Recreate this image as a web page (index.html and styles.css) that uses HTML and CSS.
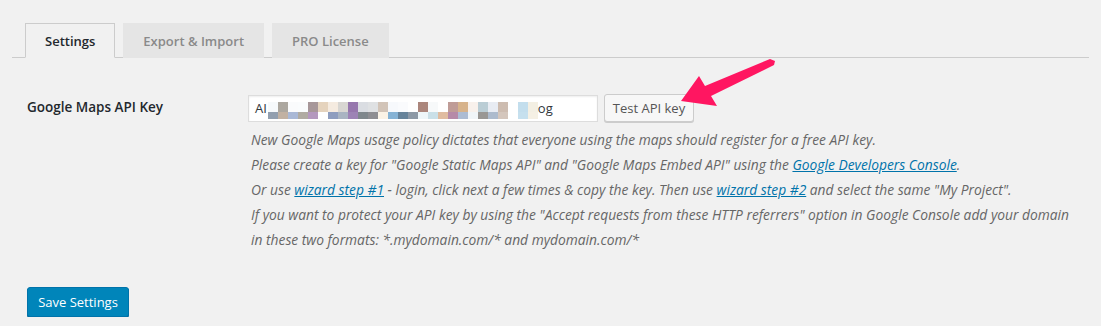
FILE: index.html
```html
<!DOCTYPE html>
<html>
<head>
<meta charset="utf-8">
<link rel="stylesheet" href="styles.css">
</head>
<body>
<div class="wrap">
  <nav class="tabs">
    <a class="tab active">Settings</a>
    <a class="tab">Export &amp; Import</a>
    <a class="tab">PRO License</a>
  </nav>
  <div class="form">
    <div class="row">
      <div class="label">Google Maps API Key</div>
      <div class="field">
        <div class="controls">
          <div class="input">
            <span class="txt">AI</span>
            <span class="mosaic">
              <i style="background:#f6f9fb"></i><i style="background:#aca79f"></i><i style="background:#fafbfc"></i><i style="background:#fafcfd"></i><i style="background:#a79799"></i><i style="background:#e5d3bd"></i><i style="background:#f5ebe0"></i><i style="background:#d8d6d2"></i><i style="background:#9677ad"></i><i style="background:#dadde2"></i><i style="background:#dfe1e3"></i><i style="background:#d2c4b8"></i><i style="background:#f7f9fc"></i><i style="background:#fafbfd"></i><i style="background:#ffffff"></i><i style="background:#ab867c"></i><i style="background:#f7f9fa"></i><i style="background:#ffffff"></i><i style="background:#bf9c97"></i><i style="background:#d7b38b"></i><i style="background:#f8f1ec"></i><i style="background:#bacdd5"></i><i style="background:#e8ecf3"></i><i style="background:#cdbcb0"></i><i style="background:#ffffff"></i><i style="background:#c3deed"></i><i style="background:#f3efe3"></i>
              <i style="background:#929faf"></i><i style="background:#c1b1a2"></i><i style="background:#a9b8d6"></i><i style="background:#b0aba2"></i><i style="background:#b498be"></i><i style="background:#ffffff"></i><i style="background:#8e9dbf"></i><i style="background:#a9b4c2"></i><i style="background:#9d83b5"></i><i style="background:#7f878c"></i><i style="background:#8e8e92"></i><i style="background:#fbf3e6"></i><i style="background:#86b3d5"></i><i style="background:#66839a"></i><i style="background:#8d99a6"></i><i style="background:#eef6f9"></i><i style="background:#cae0e8"></i><i style="background:#e0bca0"></i><i style="background:#b68aa8"></i><i style="background:#acbcd3"></i><i style="background:#f0f5f8"></i><i style="background:#999794"></i><i style="background:#adbbcd"></i><i style="background:#d4c6bc"></i><i style="background:#ffffff"></i><i style="background:#c6e0ee"></i><i style="background:#f5f0e4"></i>
            </span>
            <span class="txt">og</span>
          </div>
          <button class="btn">Test API key</button>
        </div>
        <p class="description">New Google Maps usage policy dictates that everyone using the maps should register for a free API key.<br>
        Please create a key for "Google Static Maps API" and "Google Maps Embed API" using the <a href="#">Google Developers Console</a>.<br>
        Or use <a href="#">wizard step #1</a> - login, click next a few times &amp; copy the key. Then use <a href="#">wizard step #2</a> and select the same "My Project".<br>
        If you want to protect your API key by using the "Accept requests from these HTTP referrers" option in Google Console add your domain<br>in these two formats: *.mydomain.com/* and mydomain.com/*</p>
      </div>
    </div>
    <div class="submit">
      <button class="primary">Save Settings</button>
    </div>
  </div>
</div>
<svg class="arrow" width="110" height="60" viewBox="670 55 110 60">
  <polygon points="681,101 699,76 705,86 770,59 775,61 774,65 711,96 717,106" fill="#ff1661"/>
</svg>
</body>
</html>
```
FILE: styles.css
```css
html, body {
  margin: 0;
  padding: 0;
  background: #f1f1f1;
  font-family: "Open Sans", "Noto Sans", sans-serif;
  color: #444;
}
.wrap {
  padding: 23px 12px 0 12px;
}
.tabs {
  display: flex;
  gap: 8px;
  padding-left: 13px;
  border-bottom: 1px solid #ccc;
  height: 34px;
}
.tab {
  display: flex;
  align-items: center;
  box-sizing: border-box;
  height: 35px;
  padding: 0 19px;
  background: #e5e5e5;
  border: 1px solid #e5e5e5;
  border-bottom: none;
  font-size: 13px;
  font-weight: 600;
  color: #8a8a8a;
  white-space: nowrap;
}
.tab.active {
  background: #f1f1f1;
  border-color: #ccc;
  color: #23282d;
  border-bottom: 1px solid #f1f1f1;
}
.form {
  padding-left: 15px;
}
.row {
  display: flex;
  padding-top: 36px;
}
.label {
  width: 221px;
  font-size: 13.5px;
  font-weight: 600;
  color: #23282d;
  padding-top: 4px;
}
.controls {
  display: flex;
  align-items: center;
  gap: 6px;
}
.input {
  box-sizing: border-box;
  width: 350px;
  height: 27px;
  background: #fff;
  border: 1px solid #ddd;
  box-shadow: inset 0 1px 2px rgba(0,0,0,.07);
  display: flex;
  align-items: center;
  padding-left: 6px;
  font-size: 13px;
  color: #32373c;
}
.mosaic {
  display: grid;
  grid-template-columns: repeat(27, 10px);
  grid-template-rows: 10px 7px;
  margin: 6px 0 0 1px;
  align-self: flex-start;
}
.mosaic i {
  display: block;
}
.btn {
  box-sizing: border-box;
  height: 28px;
  width: 90px;
  padding: 0;
  white-space: nowrap;
  font-family: inherit;
  font-size: 13px;
  color: #555;
  background: #f7f7f7;
  border: 1px solid #ccc;
  border-radius: 3px;
  box-shadow: 0 1px 0 #ccc;
}
.description {
  margin: 5px 0 0 3px;
  font-size: 13.8px;
  font-style: italic;
  line-height: 25px;
  color: #666;
}
.description a {
  color: #0073aa;
}
.submit {
  padding-top: 35px;
}
.primary {
  box-sizing: border-box;
  width: 102px;
  height: 30px;
  background: #0085ba;
  border: 1px solid #0073aa;
  border-radius: 3px;
  box-shadow: 0 1px 0 #006799;
  color: #fff;
  font-family: inherit;
  font-size: 13px;
  padding: 0;
}
.arrow {
  position: absolute;
  left: 670px;
  top: 55px;
}
```
